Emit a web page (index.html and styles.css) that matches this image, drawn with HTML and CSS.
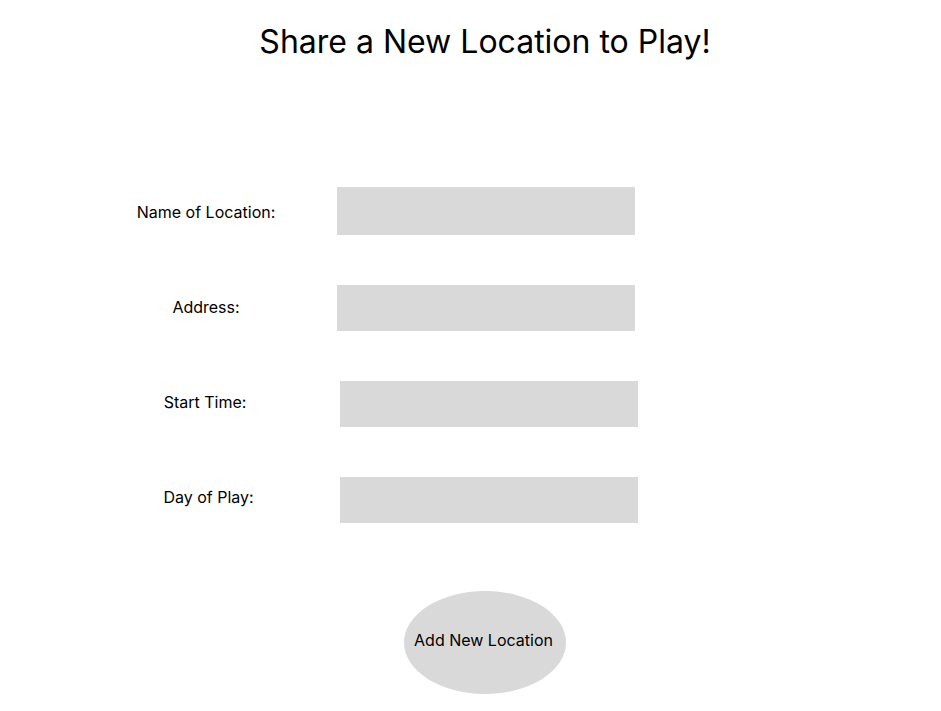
FILE: index.html
```html
<!DOCTYPE html>
<html lang="en">
<head>
<meta charset="utf-8">
<title>Share a New Location to Play!</title>
<link rel="stylesheet" href="styles.css">
</head>
<body>
<main class="page">
  <h1 class="title">Share a New Location to Play!</h1>
  <form class="form">
    <div class="row">
      <label class="label label--name" for="name">Name of Location:</label>
      <input class="field" id="name" type="text">
    </div>
    <div class="row">
      <label class="label label--address" for="address">Address:</label>
      <input class="field field--short" id="address" type="text">
    </div>
    <div class="row row--shift">
      <label class="label label--start" for="start">Start Time:</label>
      <input class="field field--short" id="start" type="text">
    </div>
    <div class="row row--shift">
      <label class="label label--day" for="day">Day of Play:</label>
      <input class="field field--short" id="day" type="text">
    </div>
    <div class="actions">
      <button class="submit" type="button">Add New Location</button>
    </div>
  </form>
</main>
</body>
</html>
```

FILE: styles.css
```css
html, body {
  margin: 0;
  padding: 0;
  background: #ffffff;
}

body {
  font-family: Inter, "Noto Sans", sans-serif;
  color: #000000;
}

.page {
  width: 941px;
  height: 711px;
  overflow: hidden;
}

.title {
  margin: 0;
  padding: 22px 0 0 29px;
  font-size: 32px;
  line-height: 40px;
  font-weight: 400;
  text-align: center;
}

.form {
  margin-top: 125px;
  display: flex;
  flex-direction: column;
  gap: 50px;
}

.row {
  display: flex;
  align-items: center;
  padding-left: 130px;
}

.label {
  width: 152px;
  margin-right: 55px;
  text-align: center;
  font-size: 16px;
  line-height: 20px;
}

.label--name {
  margin-top: 2px;
}

.label--address {
  margin-top: -2px;
}

.label--start {
  margin-top: -5px;
  margin-right: 58px;
  padding-right: 2px;
  width: 150px;
}

.label--day {
  margin-top: -7px;
  margin-right: 58px;
  padding-left: 5px;
  width: 147px;
}

.field {
  width: 298px;
  height: 48px;
  margin: 0;
  padding: 0;
  border: none;
  border-radius: 0;
  background: #d9d9d9;
  outline: none;
}

.field--short {
  height: 46px;
}

.actions {
  display: flex;
  justify-content: center;
  padding-left: 29px;
  margin-top: 18px;
}

.submit {
  width: 162px;
  height: 103px;
  border: none;
  border-radius: 50%;
  background: #d9d9d9;
  font-family: Inter, "Noto Sans", sans-serif;
  font-size: 16px;
  color: #000000;
  padding: 0 3px 6px 0;
}
```
